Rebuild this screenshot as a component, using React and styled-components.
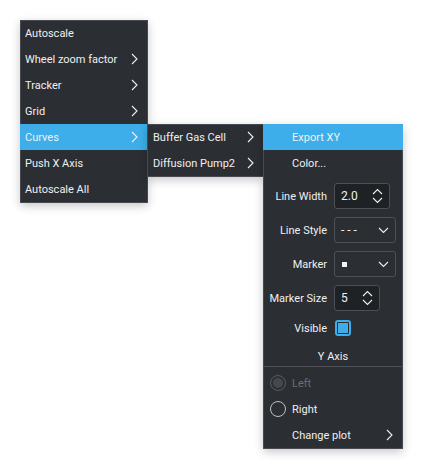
import React from 'react'
import styled, { createGlobalStyle } from 'styled-components';

const GlobalStyle = createGlobalStyle`
  html, body {
    margin: 0;
    padding: 0;
    background: #ffffff;
  }
  body {
    font-family: Roboto, "Noto Sans", sans-serif;
    font-size: 11px;
    color: #eff0f1;
  }
`;

const Canvas = styled.div`
  position: relative;
  width: 423px;
  height: 468px;
  overflow: hidden;
`;

const Menu = styled.div`
  position: absolute;
  left: ${p => p.x}px;
  top: ${p => p.y}px;
  width: ${p => p.w}px;
  box-sizing: border-box;
  background: #2b2e33;
  border: 1px solid #464a50;
  box-shadow: 0 3px 9px rgba(0, 0, 0, 0.22);
  display: flex;
  flex-direction: column;
`;

const Item = styled.div`
  height: 26px;
  display: flex;
  align-items: center;
  justify-content: space-between;
  padding: 0 ${p => p.pr || 10}px 0 ${p => p.pl || 5}px;
  margin: 0 -1px;
  background: ${p => (p.active ? '#3daee9' : 'transparent')};
  color: ${p => (p.disabled ? '#6b6f74' : '#eff0f1')};
  white-space: nowrap;
  &:first-child {
    margin-top: -1px;
  }
`;

const Chevron = () => (
  <svg width="7" height="12" viewBox="0 0 7 12">
    <path d="M1 1 L6 6 L1 11" fill="none" stroke="#eff0f1" strokeWidth="1.1" />
  </svg>
);

const Form = styled.div`
  display: grid;
  grid-template-columns: 63px auto;
  column-gap: 7px;
  row-gap: 8px;
  align-items: center;
  padding: 7px 0 9px;
`;

const Label = styled.div`
  text-align: right;
  white-space: nowrap;
`;

const Field = styled.div`
  height: 26px;
  width: ${p => p.w}px;
  box-sizing: border-box;
  border: 1px solid #4d5157;
  border-radius: 3px;
  background: ${p => (p.dark ? '#1f2225' : '#2b2e33')};
  display: flex;
  align-items: center;
  justify-content: space-between;
  padding: 0 6px 0 6px;
  font-size: 12px;
`;

const Arrows = () => (
  <svg width="11" height="16" viewBox="0 0 11 16">
    <path d="M1 6 L5.5 1.5 L10 6" fill="none" stroke="#eff0f1" strokeWidth="1.1" />
    <path d="M1 10 L5.5 14.5 L10 10" fill="none" stroke="#eff0f1" strokeWidth="1.1" />
  </svg>
);

const Down = () => (
  <svg width="11" height="7" viewBox="0 0 11 7">
    <path d="M1 1 L5.5 5.5 L10 1" fill="none" stroke="#eff0f1" strokeWidth="1.1" />
  </svg>
);

const MarkerDot = styled.span`
  width: 5px;
  height: 5px;
  background: #f4f4f6;
  margin-left: 1px;
`;

const CheckBox = styled.div`
  width: 16px;
  height: 16px;
  box-sizing: border-box;
  border: 2px solid #3daee9;
  border-radius: 3px;
  padding: 1px;
  margin: 1px 0 1px 1px;
  &::after {
    content: '';
    display: block;
    width: 100%;
    height: 100%;
    background: #3daee9;
  }
`;

const SectionTitle = styled.div`
  height: 20px;
  display: flex;
  align-items: center;
  justify-content: center;
  border-bottom: 1px solid #4d5157;
  margin-bottom: 3px;
`;

const RadioRow = styled.div`
  height: 26px;
  display: flex;
  align-items: center;
  gap: 6px;
  padding-left: 6px;
  color: ${p => (p.disabled ? '#6b6f74' : '#eff0f1')};
`;

const Radio = styled.span`
  width: 16px;
  height: 16px;
  box-sizing: border-box;
  border-radius: 50%;
  border: 1px solid ${p => (p.disabled ? '#55595e' : '#bfc1c3')};
  background: ${p => (p.disabled ? '#45494e' : 'transparent')};
  box-shadow: ${p => (p.disabled ? 'inset 0 0 0 2px #2b2e33' : 'none')};
`;

export default function App() {
  return (
    <Canvas>
      <GlobalStyle />
      <Menu x={20} y={20} w={128}>
        <Item>Autoscale</Item>
        <Item>Wheel zoom factor <Chevron /></Item>
        <Item>Tracker <Chevron /></Item>
        <Item>Grid <Chevron /></Item>
        <Item active>Curves <Chevron /></Item>
        <Item>Push X Axis</Item>
        <Item>Autoscale All</Item>
      </Menu>

      <Menu x={147} y={124} w={117}>
        <Item pl={6}>Buffer Gas Cell <Chevron /></Item>
        <Item pl={6}>Diffusion Pump2 <Chevron /></Item>
      </Menu>

      <Menu x={263} y={124} w={140}>
        <Item active pl={29}>Export XY</Item>
        <Item pl={29}>Color...</Item>
        <Form>
          <Label>Line Width</Label>
          <Field w={56} dark>2.0 <Arrows /></Field>
          <Label>Line Style</Label>
          <Field w={62}>- - - <Down /></Field>
          <Label>Marker</Label>
          <Field w={62}><MarkerDot /> <Down /></Field>
          <Label>Marker Size</Label>
          <Field w={46} dark>5 <Arrows /></Field>
          <Label>Visible</Label>
          <CheckBox />
        </Form>
        <SectionTitle>Y Axis</SectionTitle>
        <RadioRow disabled><Radio disabled />Left</RadioRow>
        <RadioRow><Radio />Right</RadioRow>
        <Item pl={29}>Change plot <Chevron /></Item>
      </Menu>
    </Canvas>
  );
}
